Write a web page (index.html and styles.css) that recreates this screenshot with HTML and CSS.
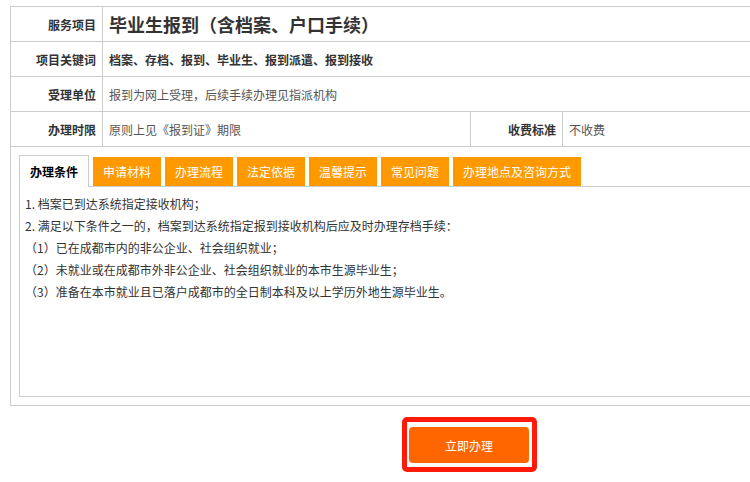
FILE: index.html
```html
<!DOCTYPE html>
<html lang="zh-CN">
<head>
<meta charset="utf-8">
<title>毕业生报到</title>
<link rel="stylesheet" href="styles.css">
</head>
<body>
<div class="page">
  <div class="info">
    <div class="cell label">服务项目</div>
    <div class="cell value span3 title">毕业生报到（含档案、户口手续）</div>
    <div class="cell label">项目关键词</div>
    <div class="cell value span3 strong">档案、存档、报到、毕业生、报到派遣、报到接收</div>
    <div class="cell label">受理单位</div>
    <div class="cell value span3 plain">报到为网上受理，后续手续办理见指派机构</div>
    <div class="cell label">办理时限</div>
    <div class="cell value plain">原则上见《报到证》期限</div>
    <div class="cell label">收费标准</div>
    <div class="cell value plain">不收费</div>
    <div class="cell panel">
      <div class="tabs">
        <div class="tab active">办理条件</div>
        <div class="tab">申请材料</div>
        <div class="tab">办理流程</div>
        <div class="tab">法定依据</div>
        <div class="tab">温馨提示</div>
        <div class="tab">常见问题</div>
        <div class="tab">办理地点及咨询方式</div>
      </div>
      <div class="tab-body">
        <p>1. 档案已到达系统指定接收机构；</p>
        <p>2. 满足以下条件之一的，档案到达系统指定报到接收机构后应及时办理存档手续：</p>
        <p>（1）已在成都市内的非公企业、社会组织就业；</p>
        <p>（2）未就业或在成都市外非公企业、社会组织就业的本市生源毕业生；</p>
        <p>（3）准备在本市就业且已落户成都市的全日制本科及以上学历外地生源毕业生。</p>
      </div>
    </div>
  </div>
  <div class="actions">
    <div class="highlight">
      <button class="apply" type="button">立即办理</button>
    </div>
  </div>
</div>
</body>
</html>
```
FILE: styles.css
```css
html, body {
  margin: 0;
  padding: 0;
  overflow: hidden;
  background: #fff;
}

body {
  font-family: "Noto Sans CJK SC", "Microsoft YaHei", sans-serif;
  font-size: 12px;
  color: #333;
}

.page {
  width: 919px;
  padding: 6px 0 0 10px;
}

.info {
  display: grid;
  grid-template-columns: 92px 368px 92px 1fr;
  border-top: 1px solid #ccc;
  border-left: 1px solid #ccc;
}

.cell {
  box-sizing: border-box;
  height: 35px;
  display: flex;
  align-items: center;
  border-right: 1px solid #ccc;
  border-bottom: 1px solid #ccc;
  padding: 0 6px;
  white-space: nowrap;
}

.label {
  justify-content: flex-end;
  font-weight: bold;
  color: #333;
}

.span3 {
  grid-column: span 3;
}

.title {
  font-size: 18px;
  font-weight: bold;
  color: #333;
}

.strong {
  font-weight: bold;
  color: #333;
}

.plain {
  color: #555;
}

.panel {
  grid-column: 1 / -1;
  height: auto;
  display: block;
  padding: 8px;
}

.tabs {
  display: flex;
  align-items: flex-end;
  gap: 4px;
  height: 31px;
}

.tab {
  box-sizing: border-box;
  height: 29px;
  line-height: 29px;
  padding: 0 10px;
  background: #ff9900;
  color: #fff;
  font-size: 12px;
}

.tab.active {
  position: relative;
  height: 32px;
  line-height: 31px;
  margin-bottom: -1px;
  background: #fff;
  color: #000;
  font-weight: bold;
  border: 1px solid #ccc;
  border-bottom: 0;
}

.tab-body {
  box-sizing: border-box;
  height: 211px;
  border: 1px solid #ccc;
  padding: 6px 5px;
  line-height: 22px;
  color: #333;
}

.tab-body p {
  margin: 0;
}

.actions {
  display: flex;
  justify-content: center;
  margin-top: 11px;
}

.highlight {
  border: 5px solid #ff1a0a;
  border-radius: 5px;
  padding: 5px 3px 4px 2px;
  background: #fff;
}

.apply {
  display: block;
  width: 120px;
  height: 36px;
  border: 0;
  border-radius: 4px;
  background: #ff6600;
  color: #fff;
  font-family: inherit;
  font-size: 12px;
  padding: 0;
}
```
